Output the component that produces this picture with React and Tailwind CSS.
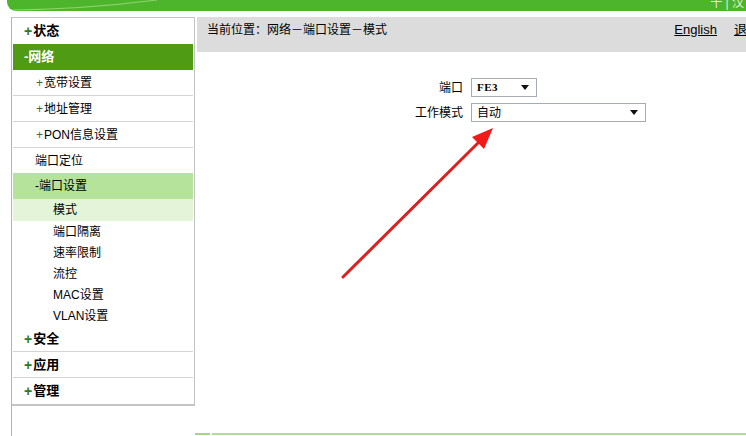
import React from "react";

const cjk = "font-['Liberation_Sans','Noto_Sans_CJK_SC',sans-serif]";

// Left menu rows, top to bottom
const menu = [
  { label: "状态", type: "top" },
  { label: "网络", type: "topOpen" },
  { label: "宽带设置", type: "sub" },
  { label: "地址管理", type: "sub" },
  { label: "PON信息设置", type: "sub" },
  { label: "端口定位", type: "plain" },
  { label: "端口设置", type: "subOpen" },
  { label: "模式", type: "leafActive" },
  { label: "端口隔离", type: "leaf" },
  { label: "速率限制", type: "leaf" },
  { label: "流控", type: "leaf" },
  { label: "MAC设置", type: "leaf" },
  { label: "VLAN设置", type: "leaf" },
  { label: "安全", type: "top", border: true },
  { label: "应用", type: "top", border: true },
  { label: "管理", type: "top" },
];

const MenuRow = ({ item }) => {
  switch (item.type) {
    case "top":
      return (
        <div
          className={`h-[26px] flex items-center pl-[11px] text-[13px] font-bold text-black ${
            item.border ? "border-b border-[#d4d4d4]" : ""
          }`}
        >
          <span className="text-[#2f7a1c] font-bold text-[14px] leading-none mr-[1px]">+</span>
          {item.label}
        </div>
      );
    case "topOpen":
      return (
        <div className="h-[26px] flex items-center pl-[11px] text-[13px] font-bold text-white bg-[#4f9c14]">
          -{item.label}
        </div>
      );
    case "sub":
      return (
        <div className="h-[26px] flex items-center pl-[23px] text-[12px] text-black border-b border-[#d4d4d4]">
          <span className="text-[#3f6b32] mr-[1px]">+</span>
          {item.label}
        </div>
      );
    case "plain":
      return (
        <div className="h-[25px] flex items-center pl-[22px] text-[12px] text-black">
          {item.label}
        </div>
      );
    case "subOpen":
      return (
        <div className="h-[26px] flex items-center pl-[22px] text-[12px] text-black bg-[#b6e39b]">
          -{item.label}
        </div>
      );
    case "leafActive":
      return (
        <div className="h-[22px] flex items-center pl-[40px] text-[12px] text-black bg-[#e3f4d8]">
          {item.label}
        </div>
      );
    default:
      return (
        <div className="h-[21px] flex items-center pl-[40px] text-[12px] text-black">
          {item.label}
        </div>
      );
  }
};

const Select = ({ value, width, mono }) => (
  <div
    className={`${width} h-[19px] border border-[#a5acb5] bg-white flex items-center justify-between pl-[5px] pr-[7px]`}
  >
    <span
      className={
        mono
          ? "text-[11px] font-['Liberation_Serif',serif] font-bold tracking-[0.5px]"
          : "text-[12px]"
      }
    >
      {value}
    </span>
    <svg width="8" height="5" viewBox="0 0 8 5">
      <path d="M0 0 L8 0 L4 5 Z" fill="#111" />
    </svg>
  </div>
);

export default function App() {
  return (
    <div className={`relative w-[746px] h-[436px] overflow-hidden bg-white flex flex-col ${cjk}`}>
      {/* top green banner */}
      <div className="ml-[7px] h-[11px] bg-[#4cb52b] rounded-bl-[9px] relative overflow-hidden flex justify-end">
        <svg className="absolute left-0 top-0" width="200" height="11" viewBox="0 0 200 11">
          <path d="M6 10 Q 80 9 150 0" stroke="#8fd070" strokeWidth="1.2" fill="none" />
        </svg>
        <span className="text-white text-[12px] leading-[12px] -mt-[3px] pr-[2px] opacity-80">十 | 汉</span>
      </div>

      <div className="flex flex-1 mt-[6px]">
        {/* sidebar */}
        <div className="ml-[11px] w-[184px] border-l border-[#b4b4b4] flex flex-col">
          <div className="border-t border-r border-b-2 border-[#c4c4c4] px-[1px]">
            {menu.map((item) => (
              <MenuRow key={item.label} item={item} />
            ))}
          </div>
        </div>

        {/* main */}
        <div className="ml-[2px] flex-1 min-w-0 flex flex-col">
          <div className="w-[563px] h-[35px] bg-[#dcdcdc] flex justify-between pl-[10px] pt-[6px] text-[12px] leading-[14px] text-black">
            <span>当前位置：网络－端口设置－模式</span>
            <div className="flex gap-[17px]">
              <span className="underline text-[13px] font-['Liberation_Sans',sans-serif]">English</span>
              <span className="underline text-[13px]">退出</span>
            </div>
          </div>

          <div className="mt-[26px] ml-[218px] grid grid-cols-[48px_auto] gap-x-[8px] gap-y-[6px] items-center text-[12px] text-black">
            <span className="text-right">端口</span>
            <Select value="FE3" width="w-[66px]" mono />
            <span className="text-right">工作模式</span>
            <Select value="自动" width="w-[175px]" />
          </div>

          <div className="flex-1" />
          <div className="-ml-[2px] flex gap-[2px] mb-[1px]">
            <div className="w-[15px] h-[2px] bg-[#a9d58b]" />
            <div className="flex-1 h-[2px] bg-[#b3dc96]" />
          </div>
        </div>
      </div>

      {/* red annotation arrow */}
      <svg className="absolute left-0 top-0 pointer-events-none" width="746" height="436" viewBox="0 0 746 436">
        <line x1="343" y1="277" x2="480" y2="141" stroke="#de1f1f" strokeWidth="3" strokeLinecap="round" />
        <path d="M493 128 L472 137 L484 149 Z" fill="#f01a1a" />
      </svg>
    </div>
  );
}
